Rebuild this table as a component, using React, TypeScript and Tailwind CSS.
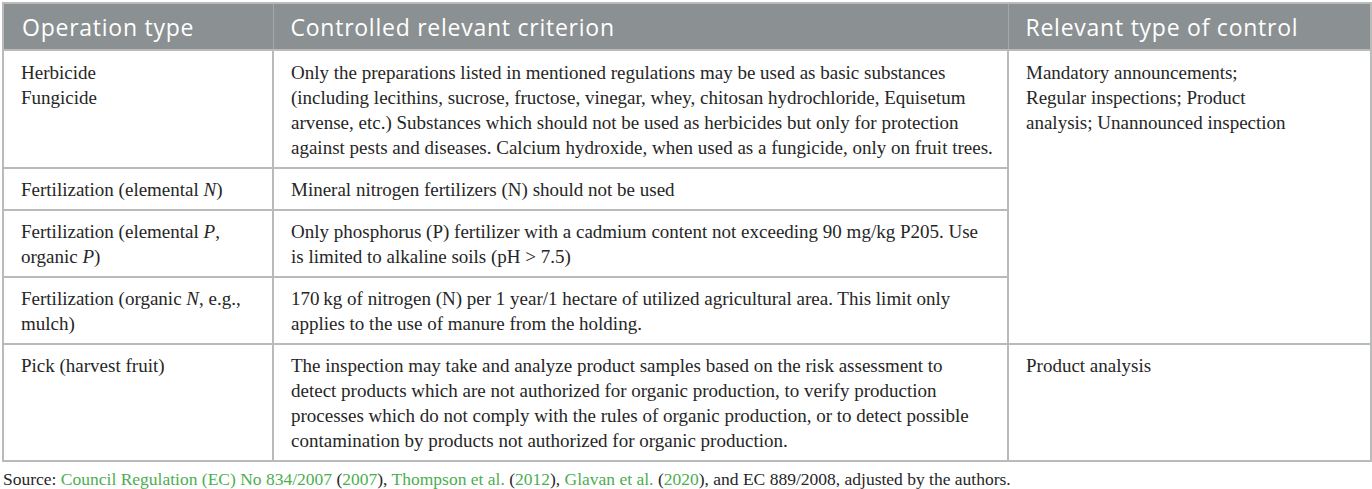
import React from "react";

const serif = "font-['Liberation_Serif','Times_New_Roman',serif]";
const sans = "font-['Open_Sans','Noto_Sans',sans-serif]";

function Lines({ lines }: { lines: React.ReactNode[] }) {
  return (
    <>
      {lines.map((l, i) => (
        <div key={i} className="whitespace-nowrap">
          {l}
        </div>
      ))}
    </>
  );
}

const td = "border-2 border-[#b9bbba] align-top px-[17px] pt-[8px] pb-[7px]";
const th = `${sans} text-left font-normal text-[23px] leading-[28px] tracking-[0.75px] py-0 border-t-2 border-t-[#b9bdb9]`;
const link = "text-[#4cae4f]";

export default function App() {
  return (
    <div className={`w-[1372px] h-[489px] overflow-hidden bg-white pt-[2px] pl-[2px] ${serif} text-[#262626]`}>
      <table className="table-fixed border-collapse w-[1368px] text-[19px] leading-[25px]">
        <colgroup>
          <col className="w-[270px]" />
          <col className="w-[735px]" />
          <col className="w-[363px]" />
        </colgroup>
        <thead>
          <tr className="bg-[#8b9092] text-white h-[47px]">
            <th className={`${th} px-[18px] border-l-2 border-l-[#b9bbba] border-r border-r-[#a3a8aa]`}>
              Operation type
            </th>
            <th className={`${th} px-[17px] border-x border-x-[#a3a8aa]`}>
              Controlled relevant criterion
            </th>
            <th className={`${th} px-[17px] border-r-2 border-r-[#b9bbba] border-l border-l-[#a3a8aa]`}>
              Relevant type of control
            </th>
          </tr>
        </thead>
        <tbody>
          <tr>
            <td className={`${td} pt-[9px] pb-[4px]`}>
              <Lines lines={["Herbicide", "Fungicide"]} />
            </td>
            <td className={`${td} pt-[9px] pb-[4px]`}>
              <Lines
                lines={[
                  "Only the preparations listed in mentioned regulations may be used as basic substances",
                  "(including lecithins, sucrose, fructose, vinegar, whey, chitosan hydrochloride, Equisetum",
                  "arvense, etc.) Substances which should not be used as herbicides but only for protection",
                  "against pests and diseases. Calcium hydroxide, when used as a fungicide, only on fruit trees.",
                ]}
              />
            </td>
            <td className={`${td} pt-[9px] pb-[4px]`} rowSpan={4}>
              <Lines
                lines={[
                  "Mandatory announcements;",
                  "Regular inspections; Product",
                  "analysis; Unannounced inspection",
                ]}
              />
            </td>
          </tr>
          <tr>
            <td className={td}>
              <Lines
                lines={[
                  <>
                    Fertilization (elemental <i>N</i>)
                  </>,
                ]}
              />
            </td>
            <td className={td}>
              <Lines lines={["Mineral nitrogen fertilizers (N) should not be used"]} />
            </td>
          </tr>
          <tr>
            <td className={`${td} pb-[6px]`}>
              <Lines
                lines={[
                  <>
                    Fertilization (elemental <i>P</i>,
                  </>,
                  <>
                    organic <i>P</i>)
                  </>,
                ]}
              />
            </td>
            <td className={`${td} pb-[6px]`}>
              <Lines
                lines={[
                  "Only phosphorus (P) fertilizer with a cadmium content not exceeding 90 mg/kg P205. Use",
                  "is limited to alkaline soils (pH > 7.5)",
                ]}
              />
            </td>
          </tr>
          <tr>
            <td className={`${td} pb-[6px]`}>
              <Lines
                lines={[
                  <>
                    Fertilization (organic <i>N</i>, e.g.,
                  </>,
                  "mulch)",
                ]}
              />
            </td>
            <td className={`${td} pb-[6px]`}>
              <Lines
                lines={[
                  "170\u2009kg of nitrogen (N) per 1 year/1 hectare of utilized agricultural area. This limit only",
                  "applies to the use of manure from the holding.",
                ]}
              />
            </td>
          </tr>
          <tr>
            <td className={td}>
              <Lines lines={["Pick (harvest fruit)"]} />
            </td>
            <td className={td}>
              <Lines
                lines={[
                  "The inspection may take and analyze product samples based on the risk assessment to",
                  "detect products which are not authorized for organic production, to verify production",
                  "processes which do not comply with the rules of organic production, or to detect possible",
                  "contamination by products not authorized for organic production.",
                ]}
              />
            </td>
            <td className={td}>
              <Lines lines={["Product analysis"]} />
            </td>
          </tr>
        </tbody>
      </table>
      <p className="mt-[7px] pl-px text-[17.5px] leading-[20px] whitespace-nowrap text-[#262626]">
        Source: <span className={link}>Council Regulation (EC) No 834/2007</span> (<span className={link}>2007</span>),{" "}
        <span className={link}>Thompson et al.</span> (<span className={link}>2012</span>),{" "}
        <span className={link}>Glavan et al.</span> (<span className={link}>2020</span>), and EC 889/2008, adjusted by
        the authors.
      </p>
    </div>
  );
}
